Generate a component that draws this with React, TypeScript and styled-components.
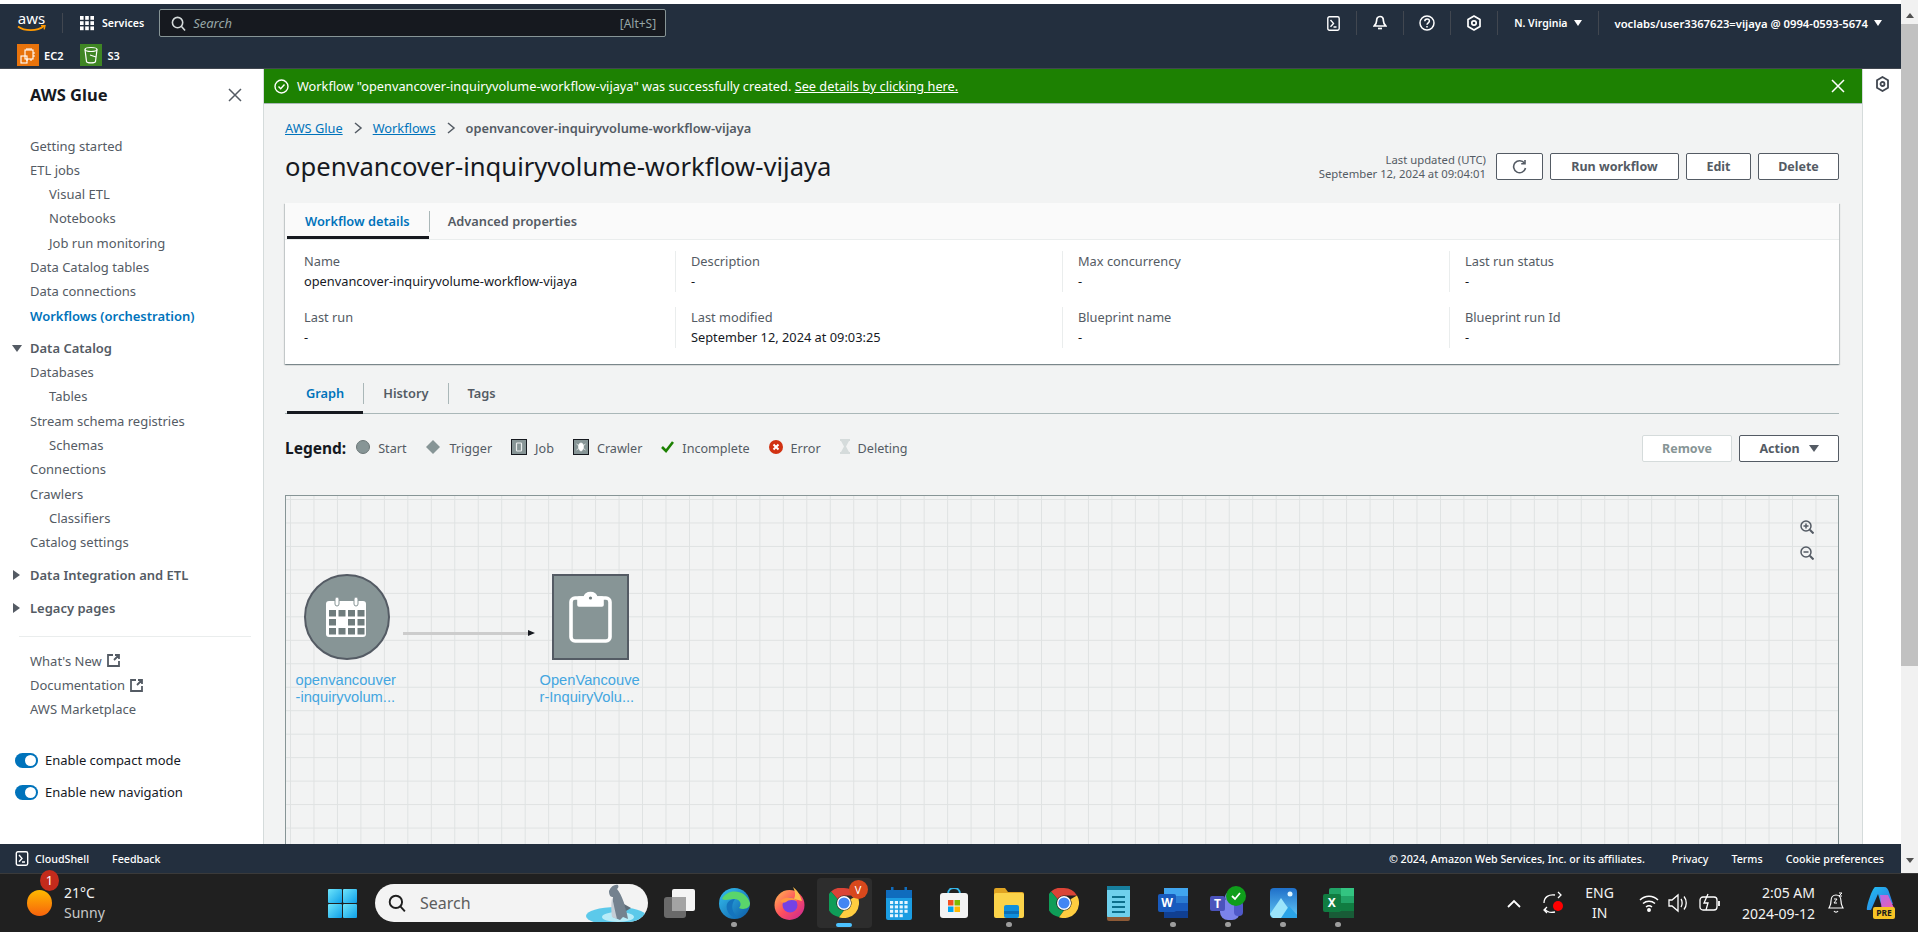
import React from "react";
import styled, { createGlobalStyle } from "styled-components";

const GlobalStyle = createGlobalStyle`
  html, body {
    margin: 0;
    height: 100%;
    overflow: hidden;
    background: #fff;
    font-family: "Noto Sans", "Open Sans", sans-serif;
  }
  * { box-sizing: border-box; }
`;

const Screen = styled.div`
  width: 1918px;
  height: 932px;
  display: flex;
  flex-direction: column;
  overflow: hidden;
`;

const BrowserArea = styled.div`
  height: 873px;
  display: flex;
`;

const Console = styled.div`
  flex: 1;
  min-width: 0;
  display: flex;
  flex-direction: column;
  padding-top: 4px;
`;

const PageScrollbar = styled.div`
  width: 17px;
  background: #f1f1f1;
  display: flex;
  flex-direction: column;
  align-items: center;
  justify-content: space-between;
`;

const ScrollArrow = styled.div<{ $down?: boolean }>`
  width: 100%;
  height: 17px;
  display: flex;
  align-items: center;
  justify-content: center;
  flex-shrink: 0;
  margin-top: ${(p) => (p.$down ? "auto" : "7px")};
  margin-bottom: ${(p) => (p.$down ? "4px" : "0")};

  &::after {
    content: "";
    border-left: 4px solid transparent;
    border-right: 4px solid transparent;
    border-${(p) => (p.$down ? "top" : "bottom")}: 5px solid #505050;
  }
`;

const ScrollThumb = styled.div`
  width: 100%;
  height: 642px;
  background: #c1c1c1;
`;

/* console header */
const Header = styled.header`
  height: 65px;
  background: #232f3e;
  border-bottom: 1px solid #414750;
  color: #fff;
  flex-shrink: 0;
`;

const HeaderTop = styled.div`
  height: 33px;
  padding: 5px 19px 0 17px;
  display: flex;
  align-items: center;
`;

const LogoMark = styled.div`
  width: 29px;
  display: flex;
  flex-direction: column;
  align-items: center;
  line-height: 0;
`;

const LogoWord = styled.span`
  font-size: 15px;
  line-height: 13px;
  font-weight: 400;
  color: #fff;
`;

const LogoDivider = styled.div`
  width: 1px;
  height: 20px;
  background: #414750;
  margin: 0 17px 0 16px;
`;

const ServicesLabel = styled.span`
  font-size: 10.6px;
  font-weight: 600;
  margin-left: 8px;
`;

const SearchBox = styled.div`
  width: 507px;
  height: 28px;
  margin-left: 15px;
  background: #16191f;
  border: 1px solid #879596;
  border-radius: 2px;
  display: flex;
  align-items: center;
  padding: 0 9px 0 11px;
  gap: 7px;
`;

const SearchPlaceholder = styled.span`
  font-size: 13px;
  font-style: italic;
  color: #95a5a6;
  flex: 1;
`;

const SearchHint = styled.span`
  font-size: 12px;
  color: #95a5a6;
`;

const HeaderRight = styled.div`
  margin-left: auto;
  display: flex;
  align-items: center;
  height: 24px;
`;

const HeaderIconSlot = styled.div`
  width: 47px;
  height: 100%;
  display: flex;
  align-items: center;
  justify-content: center;
  border-right: 1px solid #414750;
`;

const HeaderMenu = styled.div<{ $bordered?: boolean }>`
  height: 100%;
  display: flex;
  align-items: center;
  gap: 6px;
  font-size: ${(p) => (p.$bordered ? "10.5px" : "11.25px")};
  font-weight: 600;
  padding-left: 16px;
  padding-right: ${(p) => (p.$bordered ? "16px" : "0")};
  border-right: ${(p) => (p.$bordered ? "1px solid #414750" : "none")};
`;

const Caret = styled.span<{ $dark?: boolean }>`
  border-left: ${(p) => (p.$dark ? 5 : 4)}px solid transparent;
  border-right: ${(p) => (p.$dark ? 5 : 4)}px solid transparent;
  border-top: ${(p) => (p.$dark ? "7px solid #545b64" : "6px solid #fff")};
`;

const Shortcuts = styled.div`
  height: 31px;
  padding: 7px 0 0 17px;
  display: flex;
  align-items: flex-start;
`;

const Shortcut = styled.div`
  display: flex;
  align-items: center;
  gap: 5px;
  font-size: 11px;
  font-weight: 600;
  margin-right: 17px;
`;

const ShortcutTile = styled.div<{ $color: string }>`
  width: 22px;
  height: 22px;
  background: ${(p) => p.$color};
  display: flex;
  align-items: center;
  justify-content: center;
`;

/* body */
const Body = styled.div`
  flex: 1;
  min-height: 0;
  display: flex;
  overflow: hidden;
`;

const Sidebar = styled.aside`
  width: 264px;
  flex-shrink: 0;
  background: #fff;
  border-right: 1px solid #d5dbdb;
  color: #545b64;
`;

const SidebarTitleRow = styled.div`
  height: 64.5px;
  padding: 14px 21px 0 30px;
  display: flex;
  align-items: flex-start;
  justify-content: space-between;
`;

const SidebarTitle = styled.div`
  font-size: 16.5px;
  font-weight: 700;
  line-height: 24px;
  color: #16191f;
`;

const CloseButton = styled.div`
  margin-top: 5px;
  line-height: 0;
`;

const NavList = styled.nav`
  display: flex;
  flex-direction: column;
`;

const NavItem = styled.div<{ $level?: number; $active?: boolean }>`
  height: 24.3px;
  line-height: 24.3px;
  font-size: 13px;
  padding-left: ${(p) => (p.$level === 1 ? 49 : 30)}px;
  font-weight: ${(p) => (p.$active ? 600 : 400)};
  color: ${(p) => (p.$active ? "#0073bb" : "#545b64")};
  display: flex;
  align-items: center;
  gap: 5px;
`;

const NavSection = styled.div<{ $gap?: number }>`
  height: 24.3px;
  margin-top: ${(p) => p.$gap ?? 8.7}px;
  font-size: 13px;
  font-weight: 600;
  color: #545b64;
  display: flex;
  align-items: center;
  padding-left: 12px;
`;

const SectionCaret = styled.span<{ $open?: boolean }>`
  width: 18px;
  display: flex;
  flex-shrink: 0;

  &::before {
    content: "";
    ${(p) =>
      p.$open
        ? `border-left: 5px solid transparent; border-right: 5px solid transparent; border-top: 7px solid #545b64;`
        : `margin-left: 1px; border-top: 5px solid transparent; border-bottom: 5px solid transparent; border-left: 7px solid #545b64;`}
  }
`;

const NavDivider = styled.div`
  height: 1px;
  background: #eaeded;
  margin: 15px 12px 12.3px 19px;
`;

const ToggleRow = styled.div<{ $first?: boolean }>`
  height: 32px;
  margin-top: ${(p) => (p.$first ? "22.5px" : "0")};
  padding-left: 15px;
  display: flex;
  align-items: center;
  gap: 7px;
  font-size: 13px;
  color: #16191f;
`;

const ToggleTrack = styled.span`
  width: 23px;
  height: 15px;
  border-radius: 8px;
  background: #0073bb;
  display: flex;
  align-items: center;
  justify-content: flex-end;
  padding-right: 2px;

  &::after {
    content: "";
    width: 11px;
    height: 11px;
    border-radius: 50%;
    background: #fff;
  }
`;

const Main = styled.main`
  flex: 1;
  min-width: 0;
  background: #f2f3f3;
  display: flex;
  flex-direction: column;
`;

const Banner = styled.div`
  height: 35px;
  background: #1d8102;
  border-bottom: 1px solid #aab7b8;
  color: #fff;
  padding: 0 17px 0 10px;
  display: flex;
  align-items: center;
  gap: 8px;
  font-size: 12.75px;
  font-weight: 400;
  flex-shrink: 0;
`;

const BannerLink = styled.span`
  text-decoration: underline;
`;

const BannerClose = styled.div`
  margin-left: auto;
  line-height: 0;
`;

const Content = styled.div`
  flex: 1;
  min-height: 0;
  padding: 14px 23px 0 21px;
  display: flex;
  flex-direction: column;
`;

const Breadcrumbs = styled.div`
  height: 20px;
  display: flex;
  align-items: center;
  font-size: 12.8px;
  gap: 9px;
`;

const CrumbLink = styled.span`
  color: #0073bb;
  text-decoration: underline;
`;

const CrumbCurrent = styled.span`
  color: #545b64;
  font-weight: 600;
`;

const TitleRow = styled.div`
  height: 35px;
  margin-top: 11px;
  display: flex;
  align-items: center;
`;

const PageTitle = styled.h1`
  margin: 0;
  font-size: 25.6px;
  font-weight: 400;
  color: #16191f;
  flex: 1;
`;

const UpdatedNote = styled.div`
  font-size: 11.3px;
  line-height: 14px;
  text-align: right;
  color: #545b64;
  margin-right: 10px;
`;

const Button = styled.div<{ $width: number; $disabled?: boolean }>`
  width: ${(p) => p.$width}px;
  height: 27px;
  margin-left: ${(p) => (p.$width === 47 ? 0 : 7)}px;
  display: flex;
  align-items: center;
  justify-content: center;
  gap: 9px;
  background: #fff;
  border: 1px solid ${(p) => (p.$disabled ? "#d5dbdb" : "#545b64")};
  border-radius: 2px;
  font-size: 12.5px;
  font-weight: 700;
  color: ${(p) => (p.$disabled ? "#879596" : "#545b64")};
`;

const Card = styled.section`
  margin-top: 19px;
  height: 161px;
  background: #fff;
  box-shadow: 0 1px 1px 0 rgba(0, 28, 36, 0.3), 1px 1px 1px 0 rgba(0, 28, 36, 0.15),
    -1px 1px 1px 0 rgba(0, 28, 36, 0.15);
  flex-shrink: 0;
`;

const CardTabs = styled.div`
  height: 37px;
  background: #fafafa;
  border-bottom: 1px solid #eaeded;
  display: flex;
  align-items: center;
  padding-left: 2px;
`;

const CardTab = styled.div<{ $active?: boolean }>`
  height: 100%;
  padding: 0 19px 0 18px;
  display: flex;
  align-items: center;
  font-size: 12.8px;
  font-weight: 600;
  color: ${(p) => (p.$active ? "#0073bb" : "#545b64")};
  box-shadow: ${(p) => (p.$active ? "inset 0 -3px 0 #16191f" : "none")};
`;

const TabRule = styled.span<{ $lift?: number }>`
  width: 1px;
  height: 21px;
  background: #aab7b8;
  margin-bottom: ${(p) => p.$lift ?? 0}px;
`;

const FieldGrid = styled.div`
  display: grid;
  grid-template-columns: 371px 387px 387px 1fr;
  padding: 11px 0 0 19px;
`;

const FieldColumn = styled.div`
  display: flex;
  flex-direction: column;
  gap: 15px;
`;

const Field = styled.div<{ $first?: boolean }>`
  height: 41px;
  border-left: ${(p) => (p.$first ? "none" : "1px solid #eaeded")};
  padding-left: ${(p) => (p.$first ? "0" : "15px")};
  font-size: 12.8px;
  line-height: 20px;
`;

const FieldLabel = styled.div`
  color: #545b64;
`;

const FieldValue = styled.div`
  color: #16191f;
`;

const GraphTabs = styled.div`
  height: 32px;
  margin-top: 18px;
  border-bottom: 1px solid #aab7b8;
  display: flex;
  align-items: center;
  padding-left: 2px;
  flex-shrink: 0;
`;

const GraphTab = styled.div<{ $active?: boolean }>`
  height: 32px;
  padding: 0 19px 9px 19px;
  display: flex;
  align-items: center;
  font-size: 12.8px;
  font-weight: 600;
  color: ${(p) => (p.$active ? "#0073bb" : "#545b64")};
  box-shadow: ${(p) => (p.$active ? "inset 0 -3px 0 #16191f" : "none")};
`;

const LegendBar = styled.div`
  height: 26px;
  margin-top: 21px;
  display: flex;
  align-items: center;
  flex-shrink: 0;
`;

const LegendTitle = styled.span`
  font-size: 15.5px;
  font-weight: 700;
  color: #16191f;
  margin-right: 10px;
`;

const LegendItems = styled.div`
  display: flex;
  align-items: center;
  gap: 19px;
  flex: 1;
`;

const LegendItem = styled.div`
  display: flex;
  align-items: center;
  gap: 8px;
  font-size: 12.6px;
  color: #545b64;
`;

const LegendGlyph = styled.span`
  line-height: 0;
  margin-bottom: 3px;
`;

const LegendLabel = styled.span`
  margin-top: 1px;
`;

const Graph = styled.div`
  position: relative;
  flex: 1;
  min-height: 0;
  margin-top: 34px;
  border: 1px solid #879596;
  border-bottom: none;
  background-color: #f2f3f3;
  background-image: linear-gradient(#dfe2e2 1px, transparent 1px),
    linear-gradient(90deg, #dfe2e2 1px, transparent 1px);
  background-size: 23.47px 23.47px;
  background-position: 4px 3px;
`;

const ZoomControls = styled.div`
  position: absolute;
  top: 24px;
  right: 24px;
  display: flex;
  flex-direction: column;
  gap: 12px;
  line-height: 0;
`;

const GraphNode = styled.div<{ $x: number; $y: number }>`
  position: absolute;
  left: ${(p) => p.$x}px;
  top: ${(p) => p.$y}px;
  width: 104px;
  display: flex;
  flex-direction: column;
  align-items: center;
`;

const StartShape = styled.div`
  width: 86px;
  height: 86px;
  border-radius: 50%;
  background: #879596;
  border: 2px solid #545b64;
  display: flex;
  align-items: center;
  justify-content: center;
`;

const JobShape = styled.div`
  width: 77px;
  height: 86px;
  background: #879596;
  border: 2px solid #545b64;
  display: flex;
  align-items: center;
  justify-content: center;
`;

const NodeLabel = styled.div`
  margin-top: 12px;
  width: 104px;
  padding-left: 1px;
  font-family: "Liberation Sans", Arial, sans-serif;
  font-size: 14.7px;
  line-height: 17px;
  color: #44a6e0;
  white-space: nowrap;
`;

const Edge = styled.div`
  position: absolute;
  left: 117px;
  top: 136px;
  width: 128px;
  height: 3px;
  background: #ccc;

  &::after {
    content: "";
    position: absolute;
    right: -4px;
    top: -2px;
    border-top: 3.5px solid transparent;
    border-bottom: 3.5px solid transparent;
    border-left: 7px solid #16191f;
  }
`;

const Rail = styled.div`
  width: 39px;
  flex-shrink: 0;
  background: #fff;
  border-left: 1px solid #d5dbdb;
  display: flex;
  justify-content: center;
  padding-top: 7px;
`;

const Footer = styled.footer`
  height: 29px;
  flex-shrink: 0;
  background: #232f3e;
  color: #fff;
  display: flex;
  align-items: center;
  padding: 0 17px 0 15px;
  font-size: 10.7px;
  font-weight: 500;
`;

const FooterLeft = styled.div`
  display: flex;
  align-items: center;
  gap: 6px;
  margin-right: 23px;
`;

const FooterRight = styled.div`
  margin-left: auto;
  display: flex;
  align-items: center;
  gap: 23px;
`;

const Copyright = styled.span`
  margin-right: 4px;
`;

/* windows taskbar */
const Taskbar = styled.div`
  height: 59px;
  flex-shrink: 0;
  background: #202020;
  border-top: 1px solid #3a3a3a;
  color: #fff;
  display: flex;
  align-items: center;
`;

const Weather = styled.div`
  position: relative;
  width: 328px;
  padding-left: 27px;
  display: flex;
  align-items: center;
  gap: 12px;
  flex-shrink: 0;
`;

const WeatherBadge = styled.span`
  position: absolute;
  left: 40px;
  top: -13px;
  width: 19px;
  height: 21px;
  border-radius: 50%;
  background: #c42b1c;
  font-size: 13px;
  line-height: 21px;
  text-align: center;
`;

const WeatherText = styled.div`
  font-size: 14px;
  line-height: 20px;
  color: #f3f3f3;
`;

const WeatherSub = styled.div`
  color: #c9c9c9;
`;

const StartButton = styled.div`
  width: 29px;
  line-height: 0;
  flex-shrink: 0;
`;

const SearchPill = styled.div`
  position: relative;
  width: 273px;
  height: 38px;
  margin-left: 18px;
  border-radius: 19px;
  background: #f3f3f3;
  display: flex;
  align-items: center;
  gap: 14px;
  padding-left: 13px;
  font-size: 16px;
  color: #5d5d5d;
  flex-shrink: 0;
  overflow: hidden;
`;

const PillArt = styled.div`
  position: absolute;
  right: 2px;
  bottom: 0;
  line-height: 0;
`;

const AppRow = styled.div`
  display: flex;
  margin-left: 4px;
  height: 50px;
`;

const AppSlot = styled.div<{ $active?: boolean }>`
  position: relative;
  width: 54.9px;
  height: 50px;
  display: flex;
  align-items: center;
  justify-content: center;
  line-height: 0;
  border-radius: 4px;
  background: ${(p) => (p.$active ? "#2d2d2d" : "transparent")};
`;

const RunningDot = styled.span<{ $active?: boolean }>`
  position: absolute;
  left: 50%;
  bottom: 1px;
  width: ${(p) => (p.$active ? 16 : 6)}px;
  height: ${(p) => (p.$active ? 4 : 5)}px;
  margin-left: ${(p) => (p.$active ? -8 : -3)}px;
  border-radius: 3px;
  background: ${(p) => (p.$active ? "#4cc2ff" : "#9d9d9d")};
`;

const AppBadge = styled.span`
  position: absolute;
  top: 2px;
  right: 4px;
  width: 19px;
  height: 19px;
  border-radius: 50%;
  background: #d8481c;
  font-size: 11px;
  line-height: 19px;
  text-align: center;
`;

const AppLetter = styled.span<{ $x: number; $bg: string; $w: number }>`
  position: absolute;
  left: ${(p) => p.$x}px;
  top: 50%;
  width: ${(p) => p.$w}px;
  height: ${(p) => p.$w}px;
  margin-top: -${(p) => p.$w / 2}px;
  background: ${(p) => p.$bg};
  border-radius: 2px;
  font-size: 12px;
  font-weight: 700;
  line-height: ${(p) => p.$w}px;
  text-align: center;
  color: #fff;
`;

const Tray = styled.div`
  margin-left: auto;
  padding-right: 23px;
  display: flex;
  align-items: center;
`;

const TrayIcon = styled.div<{ $gap?: number }>`
  margin-left: ${(p) => p.$gap ?? 0}px;
  line-height: 0;
`;

const TrayLang = styled.div`
  margin-left: 21px;
  font-size: 14px;
  line-height: 20px;
  text-align: center;
  color: #f3f3f3;
`;

const TrayClock = styled.div`
  margin-left: 21px;
  font-size: 14px;
  line-height: 21px;
  text-align: right;
  color: #f3f3f3;
`;

const CopilotWrap = styled.div`
  position: relative;
  width: 29px;
  height: 34px;
  line-height: 0;
`;

const PreTag = styled.span`
  position: absolute;
  right: 0;
  bottom: 1px;
  width: 22px;
  height: 12px;
  border-radius: 2px;
  background: #f7c325;
  color: #1a1a1a;
  font-size: 8.5px;
  font-weight: 700;
  line-height: 12px;
  text-align: center;
`;

function AwsLogo() {
  return (
    <LogoMark>
      <LogoWord>aws</LogoWord>
      <svg width="29" height="9" viewBox="0 0 29 9" fill="none" stroke="#ff9900">
        <path d="M1 1.500c7 5 19 5 26-.5" strokeWidth="1.800" />
        <path d="M24 .8l4-.4-.8 4" strokeWidth="1.400" />
      </svg>
    </LogoMark>
  );
}

function GridIcon() {
  const cells = [0, 5.2, 10.4];
  return (
    <svg width="14" height="15" viewBox="0 0 14 15" fill="#fff">
      {cells.flatMap((y) => cells.map((x) => <rect key={`${x}-${y}`} x={x} y={y} width="3.6" height="3.8" />))}
    </svg>
  );
}

function Magnifier({ size = 15, color = "#d5dbdb" }: { size?: number; color?: string }) {
  return (
    <svg width={size} height={size} viewBox="0 0 16 16" fill="none" stroke={color} strokeWidth="1.7">
      <circle cx="7" cy="7" r="5.5" />
      <path d="M11 11l4 4.4" />
    </svg>
  );
}

function TerminalIcon({ size = 13, h = 15 }: { size?: number; h?: number }) {
  return (
    <svg width={size} height={h} viewBox="0 0 13 15" fill="none" stroke="#fff" strokeWidth="1.4">
      <rect x="0.8" y="0.8" width="11.4" height="13.4" rx="1.6" />
      <path d="M3.5 4l3 3.4-3 3.4M6.5 11h3" />
    </svg>
  );
}

function BellIcon() {
  return (
    <svg width="14" height="16" viewBox="0 0 14 16" fill="none" stroke="#fff" strokeWidth="1.7">
      <path d="M7 1.500c2.400 0 3.400 2 3.400 4.200 0 2.600 1 3.700 2.400 5.300H1.200c1.400-1.600 2.400-2.700 2.400-5.300C3.600 3.500 4.600 1.500 7 1.500z" />
      <path d="M5 13.500h4" />
    </svg>
  );
}

function HelpIcon() {
  return (
    <svg width="16" height="16" viewBox="0 0 16 16" fill="none" stroke="#fff" strokeWidth="1.5">
      <circle cx="8" cy="8" r="7" />
      <path d="M5.800 6.200c0-3 4.600-3 4.600-.2 0 1.800-2.400 1.800-2.400 3.800" />
      <path d="M8 11v1.400" />
    </svg>
  );
}

function GearIcon() {
  return (
    <svg width="16" height="16" viewBox="0 0 16 16" fill="none" stroke="#fff" strokeWidth="1.7">
      <path d="M8 1l6 3.500v7L8 15l-6-3.500v-7z" strokeLinejoin="round" />
      <circle cx="8" cy="8" r="2.200" />
    </svg>
  );
}

function Ec2Glyph() {
  return (
    <svg width="16" height="18" viewBox="0 0 16 18" fill="none" stroke="#fff" strokeWidth="1.100">
      <rect x="5" y="4" width="8" height="9" />
      <path d="M7 2v2M9 2v2M11 2v2M7 13v2M11 13v2M13 7h2M13 10h2" />
      <rect x="1" y="10" width="6" height="7" />
    </svg>
  );
}

function S3Glyph() {
  return (
    <svg width="16" height="18" viewBox="0 0 16 18" fill="none" stroke="#fff" strokeWidth="1.200">
      <ellipse cx="8" cy="3.500" rx="6" ry="2" />
      <path d="M2 3.500l1.500 12c.4 1.800 8.600 1.800 9 0l1.500-12" />
      <path d="M7 9l6 2" />
    </svg>
  );
}

function CrossIcon({ size, color, weight = 1.5 }: { size: number; color: string; weight?: number }) {
  return (
    <svg width={size} height={size} viewBox="0 0 14 14" stroke={color} strokeWidth={weight} fill="none">
      <path d="M1 1l12 12M13 1L1 13" />
    </svg>
  );
}

function ExternalIcon() {
  return (
    <svg width="13" height="13" viewBox="0 0 13 13" fill="none" stroke="#545b64" strokeWidth="1.800">
      <path d="M6 1H1v11h11V7M7 6l5-5M8 1h4v4" />
    </svg>
  );
}

function CheckCircle() {
  return (
    <svg width="15" height="15" viewBox="0 0 15 15" fill="none" stroke="#fff" strokeWidth="1.400">
      <circle cx="7.500" cy="7.500" r="6.500" />
      <path d="M4.500 7.500l2.200 2.300 3.800-4.300" />
    </svg>
  );
}

function RefreshIcon() {
  return (
    <svg width="15" height="16" viewBox="0 0 15 16" fill="none" stroke="#545b64" strokeWidth="1.600">
      <path d="M12.500 4.200A6 6 0 1 0 13.500 9" />
      <path d="M13 1v3.800H9.200" />
    </svg>
  );
}

function ChevronRight() {
  return (
    <svg width="12" height="12" viewBox="0 0 12 12" fill="none" stroke="#545b64" strokeWidth="1.500">
      <path d="M3 1l6 5-6 5" />
    </svg>
  );
}

function LegendShapeStart() {
  return (
    <svg width="14" height="14" viewBox="0 0 14 14">
      <circle cx="7" cy="7" r="6.500" fill="#879596" stroke="#6b7677" />
    </svg>
  );
}

function LegendShapeTrigger() {
  return (
    <svg width="16" height="16" viewBox="0 0 16 16">
      <path d="M8 1l7 7-7 7-7-7z" fill="#879596" />
    </svg>
  );
}

function LegendShapeJob({ crawler }: { crawler?: boolean }) {
  return (
    <svg width="16" height="16" viewBox="0 0 16 16">
      <rect x="0.500" y="0.500" width="15" height="15" fill="#879596" stroke="#16191f" />
      {crawler ? (
        <path d="M8 4c1.500 0 2.500 1.500 2.500 3.500S9.500 12 8 12 5.500 9.500 5.500 7.500 6.500 4 8 4zM3.500 5l2 1.500M12.500 5l-2 1.500M3.500 11l2-1.500M12.500 11l-2-1.500" fill="#fff" stroke="#fff" strokeWidth="0.700" />
      ) : (
        <rect x="5.500" y="4" width="5" height="8" rx="0.800" fill="none" stroke="#eaeded" strokeWidth="1.200" />
      )}
    </svg>
  );
}

function LegendShapeCheck() {
  return (
    <svg width="13" height="12" viewBox="0 0 13 12" fill="none" stroke="#1d8102" strokeWidth="2.600">
      <path d="M1 6l4 4 7-9" />
    </svg>
  );
}

function LegendShapeError() {
  return (
    <svg width="14" height="14" viewBox="0 0 14 14">
      <circle cx="7" cy="7" r="7" fill="#d13212" />
      <path d="M4.500 4.500l5 5M9.500 4.500l-5 5" stroke="#fff" strokeWidth="2" />
    </svg>
  );
}

function LegendShapeDeleting() {
  return (
    <svg width="10" height="15" viewBox="0 0 10 15" fill="#d5dbdb">
      <path d="M0 0h10v2H9L6 7.500 9 13h1v2H0v-2h1l3-5.500L1 2H0z" />
    </svg>
  );
}

function ZoomIcon({ plus }: { plus?: boolean }) {
  return (
    <svg width="14" height="14" viewBox="0 0 14 14" fill="none" stroke="#545b64" strokeWidth="1.500">
      <circle cx="6" cy="6" r="5" />
      <path d="M9.800 9.800L13.500 13.500" strokeWidth="2" />
      <path d={plus ? "M3.500 6h5M6 3.500v5" : "M3.500 6h5"} />
    </svg>
  );
}

function CalendarGlyph() {
  const xs = [3, 12.5, 22, 31.5];
  const ys = [13, 22, 31];
  return (
    <svg width="41" height="40" viewBox="0 0 41 40">
      <path d="M3 4h34a3 3 0 0 1 3 3v30a3 3 0 0 1-3 3H3a3 3 0 0 1-3-3V7a3 3 0 0 1 3-3z" fill="#fff" />
      <rect x="9" y="0" width="4" height="9" rx="2" fill="#fff" stroke="#879596" />
      <rect x="28" y="0" width="4" height="9" rx="2" fill="#fff" stroke="#879596" />
      {ys.flatMap((y, row) =>
        xs.map((x, col) =>
          row === 1 && col === 1 ? null : <rect key={`${x}-${y}`} x={x} y={y} width="7" height="6.500" fill="#6f7c7d" />,
        ),
      )}
    </svg>
  );
}

function ClipboardGlyph() {
  return (
    <svg width="43" height="52" viewBox="0 0 43 52" fill="none" stroke="#fff" strokeWidth="3.600" strokeLinejoin="round">
      <rect x="2" y="7" width="39" height="43" rx="4" />
      <path d="M10 7h6c0-6 11-6 11 0h6v7H10z" fill="#fff" />
      <circle cx="21.500" cy="7" r="1.600" fill="#6f7c7d" stroke="none" />
    </svg>
  );
}

function RailIcon() {
  return (
    <svg width="13" height="16" viewBox="0 0 13 16" fill="none" stroke="#414750" strokeWidth="1.800">
      <path d="M6.500 1L12 4.200v7.600L6.500 15 1 11.800V4.200z" />
      <circle cx="6.500" cy="8" r="2" />
    </svg>
  );
}

function SunIcon() {
  return (
    <svg width="25" height="26" viewBox="0 0 25 26">
      <defs>
        <linearGradient id="sun" x1="0" y1="0" x2="0" y2="1">
          <stop offset="0" stopColor="#ffb900" />
          <stop offset="1" stopColor="#f7630c" />
        </linearGradient>
      </defs>
      <ellipse cx="12.500" cy="13" rx="12.500" ry="13" fill="url(#sun)" />
    </svg>
  );
}

function WindowsLogo() {
  return (
    <svg width="29" height="29" viewBox="0 0 29 29">
      <defs>
        <linearGradient id="win" x1="0" y1="0" x2="1" y2="1">
          <stop offset="0" stopColor="#6ee5fb" />
          <stop offset="1" stopColor="#0e9fe8" />
        </linearGradient>
      </defs>
      <rect x="0" y="0" width="14" height="14" rx="1" fill="url(#win)" />
      <rect x="15" y="0" width="14" height="14" rx="1" fill="url(#win)" />
      <rect x="0" y="15" width="14" height="14" rx="1" fill="url(#win)" />
      <rect x="15" y="15" width="14" height="14" rx="1" fill="url(#win)" />
    </svg>
  );
}

function DolphinArt() {
  return (
    <svg width="62" height="38" viewBox="0 0 62 38">
      <ellipse cx="32" cy="32" rx="30" ry="9" fill="#5cc9ea" />
      <ellipse cx="34" cy="33" rx="16" ry="5" fill="#b8ecf8" />
      <path d="M25 7c2-5 6-7 9-6 1 2 0 3-1 4 5 6 9 18 11 30l-5-2-3 3-7-3c-1-7-1-14 0-20-2 0-4-1-4-6z" fill="#74828f" />
      <path d="M28 14c-1 6-1 13 0 19l5 2c-2-7-3-15-5-21z" fill="#c5ced6" />
      <path d="M40 20l7 4-5 3z" fill="#5f6d79" />
    </svg>
  );
}

function TaskViewIcon() {
  return (
    <svg width="31" height="29" viewBox="0 0 31 29">
      <rect x="0" y="8" width="22" height="21" rx="3" fill="#6a6a6a" />
      <rect x="8" y="0" width="23" height="22" rx="2" fill="#f4f4f4" />
      <rect x="8" y="8" width="14" height="14" fill="#a3a3a3" />
    </svg>
  );
}

function EdgeIcon() {
  return (
    <svg width="31" height="31" viewBox="0 0 31 31">
      <defs>
        <linearGradient id="edgeA" x1="0" y1="0" x2="1" y2="1">
          <stop offset="0" stopColor="#35c1f1" />
          <stop offset="1" stopColor="#0c59a4" />
        </linearGradient>
      </defs>
      <circle cx="15.500" cy="15.500" r="15.500" fill="url(#edgeA)" />
      <path d="M3 11C8 0 27 1 31 15c0 6-7 7-11 5 3-3 2-9-5-9-5 0-8 2-12 0z" fill="#5ad56b" />
      <path d="M16 11c-6 0-11 5-7 13 2 4 7 6 11 6-7-5-9-12-4-19z" fill="#1474bd" />
    </svg>
  );
}

function FirefoxIcon() {
  return (
    <svg width="31" height="33" viewBox="0 0 31 33">
      <defs>
        <linearGradient id="fox" x1="0" y1="0" x2="1" y2="1">
          <stop offset="0" stopColor="#ffbd4f" />
          <stop offset="0.500" stopColor="#ff4f5e" />
          <stop offset="1" stopColor="#c5249a" />
        </linearGradient>
      </defs>
      <circle cx="15.500" cy="18" r="15" fill="url(#fox)" />
      <path d="M19 0c5 4 7 8 9 14l-8-2c2-4 1-8-1-12z" fill="#ffbd4f" />
      <circle cx="16" cy="18" r="7.500" fill="#7542e5" />
      <path d="M6 14c4-4 13-5 17 0-5-2-9-1-11 1-2 1-4 1-6-1z" fill="#ff9640" />
    </svg>
  );
}

function ChromeIcon({ size = 30 }: { size?: number }) {
  return (
    <svg width={size} height={size} viewBox="0 0 30 30">
      <path d="M15 0a15 15 0 0 1 13 7.500H15A7.500 7.500 0 0 0 8.500 11L2 3.600A15 15 0 0 1 15 0z" fill="#db4437" />
      <path d="M2 3.600L8.500 11a7.500 7.500 0 0 0 6.500 11.500L10 29A15 15 0 0 1 2 3.600z" fill="#0f9d58" />
      <path d="M28 7.500A15 15 0 0 1 10 29.200l5-6.700a7.500 7.500 0 0 0 6.500-11.300z" fill="#ffcd40" />
      <circle cx="15" cy="15" r="7" fill="#fff" />
      <circle cx="15" cy="15" r="5.600" fill="#4285f4" />
    </svg>
  );
}

function CalendarAppIcon() {
  const dots = [0, 1, 2, 3].flatMap((r) => [0, 1, 2, 3].map((c) => ({ r, c })));
  return (
    <svg width="26" height="33" viewBox="0 0 26 33">
      <rect x="0" y="3" width="26" height="30" rx="2" fill="#1b9de2" />
      <rect x="0" y="3" width="26" height="8" fill="#0f6cbd" />
      <rect x="5" y="0" width="2.500" height="6" fill="#0f6cbd" />
      <rect x="18.500" y="0" width="2.500" height="6" fill="#0f6cbd" />
      {dots
        .filter((d) => !(d.r === 3 && d.c === 3))
        .map((d) => (
          <rect key={`${d.r}-${d.c}`} x={4 + d.c * 4.800} y={14 + d.r * 4.400} width="3.200" height="3" fill="#e6f5ff" />
        ))}
    </svg>
  );
}

function StoreIcon() {
  return (
    <svg width="28" height="30" viewBox="0 0 28 30">
      <path d="M8 6c0-8 12-8 12 0" fill="none" stroke="#35b6e8" strokeWidth="2" />
      <rect x="0" y="5" width="28" height="25" rx="3" fill="#f3f3f3" />
      <rect x="8" y="12" width="5.500" height="5.500" fill="#f25022" />
      <rect x="14.500" y="12" width="5.500" height="5.500" fill="#7fba00" />
      <rect x="8" y="18.500" width="5.500" height="5.500" fill="#00a4ef" />
      <rect x="14.500" y="18.500" width="5.500" height="5.500" fill="#ffb900" />
    </svg>
  );
}

function ExplorerIcon() {
  return (
    <svg width="30" height="30" viewBox="0 0 30 30">
      <path d="M0 2a2 2 0 0 1 2-2h9l3 4h14a2 2 0 0 1 2 2v2H0z" fill="#e0a422" />
      <rect x="0" y="5" width="30" height="25" rx="2" fill="#fbd34a" />
      <rect x="10" y="17" width="15" height="13" rx="2" fill="#0f8fdc" />
      <rect x="10" y="23" width="15" height="3" fill="#0b6eb5" />
    </svg>
  );
}

function NotepadIcon() {
  return (
    <svg width="23" height="35" viewBox="0 0 23 35">
      <rect x="0" y="2" width="23" height="33" rx="2" fill="#8d5a36" />
      <rect x="0" y="2" width="23" height="29" rx="1" fill="#6fd0ec" />
      <rect x="0" y="0" width="23" height="4" fill="#177f9e" />
      <path d="M5 11h13M5 16h13M5 21h13M5 26h13" stroke="#0d6f8c" strokeWidth="2" />
    </svg>
  );
}

function WordIcon() {
  return (
    <svg width="30" height="30" viewBox="0 0 30 30">
      <rect x="6" y="0" width="24" height="30" rx="2" fill="#2b7cd3" />
      <rect x="6" y="0" width="24" height="8" fill="#41a5ee" />
      <rect x="6" y="15" width="24" height="8" fill="#185abd" />
      <rect x="6" y="23" width="24" height="7" fill="#103f91" />
    </svg>
  );
}

function TeamsIcon() {
  return (
    <svg width="37" height="34" viewBox="0 0 37 34">
      <circle cx="20" cy="11" r="5" fill="#7b83eb" />
      <rect x="10" y="13" width="20" height="21" rx="8" fill="#7b83eb" />
      <rect x="24" y="15" width="9" height="15" rx="4" fill="#5059c9" />
      <circle cx="26" cy="10" r="10" fill="#0f9d1b" />
      <path d="M22 10l3 3 5-6" fill="none" stroke="#fff" strokeWidth="1.800" />
    </svg>
  );
}

function PhotosIcon() {
  return (
    <svg width="27" height="30" viewBox="0 0 27 30">
      <defs>
        <linearGradient id="photo" x1="0" y1="0" x2="0" y2="1">
          <stop offset="0" stopColor="#1f6fc9" />
          <stop offset="1" stopColor="#62c8f5" />
        </linearGradient>
      </defs>
      <rect x="0" y="0" width="27" height="30" rx="4" fill="url(#photo)" />
      <path d="M0 26l11-16 9 13-5 7H3z" fill="#9ae4fb" />
      <path d="M11 30l8-12 8 9v3z" fill="#2aa4e8" />
      <circle cx="20" cy="6" r="2.500" fill="#dff6ff" />
    </svg>
  );
}

function ExcelIcon() {
  return (
    <svg width="31" height="30" viewBox="0 0 31 30">
      <rect x="6" y="0" width="25" height="30" rx="2" fill="#21a366" />
      <rect x="18" y="0" width="13" height="8" fill="#33c481" />
      <rect x="6" y="8" width="12" height="7" fill="#107c41" />
      <rect x="18" y="15" width="13" height="8" fill="#107c41" />
      <rect x="6" y="23" width="25" height="7" fill="#185c37" />
    </svg>
  );
}

function ChevronUp() {
  return (
    <svg width="14" height="9" viewBox="0 0 14 9" fill="none" stroke="#fff" strokeWidth="1.800">
      <path d="M1 8l6-6 6 6" />
    </svg>
  );
}

function SyncIcon() {
  return (
    <svg width="22" height="26" viewBox="0 0 22 26" fill="none" stroke="#fff" strokeWidth="1.300">
      <path d="M2 13C2 7 7 4 13 5M16 2l3 3-3 3" />
      <path d="M3 19c2 3 6 4 10 3M5 17l-3 3 3 3" />
      <circle cx="16" cy="16" r="5" fill="#f00" stroke="none" />
    </svg>
  );
}

function WifiIcon() {
  return (
    <svg width="20" height="18" viewBox="0 0 20 18" fill="none" stroke="#fff" strokeWidth="1.500">
      <path d="M1 6c5-5 13-5 18 0M4 9.500c3.500-3 8.500-3 12 0M7 13c2-1.600 4-1.600 6 0" />
      <circle cx="10" cy="16" r="1.200" fill="#fff" />
    </svg>
  );
}

function VolumeIcon() {
  return (
    <svg width="21" height="20" viewBox="0 0 21 20" fill="none" stroke="#fff" strokeWidth="1.300">
      <path d="M1 7h3l6-5v16l-6-5H1z" />
      <path d="M13 6c1.500 2 1.500 6 0 8M16 3.500c3 3.500 3 9.500 0 13" />
    </svg>
  );
}

function BatteryIcon() {
  return (
    <svg width="22" height="20" viewBox="0 0 22 20" fill="none" stroke="#fff" strokeWidth="1.300">
      <rect x="1" y="4" width="17" height="13" rx="3" />
      <path d="M20 8v5" strokeWidth="1.800" />
      <path d="M9 1L5 10h4l-2 7" />
    </svg>
  );
}

function SleepBellIcon() {
  return (
    <svg width="16" height="24" viewBox="0 0 16 24" fill="none" stroke="#fff" strokeWidth="1.200">
      <path d="M8 4c3 0 5 2.500 5 6 0 4 1 5 2 7H1c1-2 2-3 2-7 0-3.500 2-6 5-6z" />
      <path d="M6 20c1 1.500 3 1.500 4 0" />
      <path d="M6 8h3l-3 4h3M11 2h3l-3 3h3" strokeWidth="1" />
    </svg>
  );
}

function CopilotIcon() {
  return (
    <CopilotWrap>
      <svg width="29" height="30" viewBox="0 0 29 30">
        <defs>
          <linearGradient id="copA" x1="0" y1="0" x2="1" y2="1">
            <stop offset="0" stopColor="#21c3f2" />
            <stop offset="1" stopColor="#2f6fe0" />
          </linearGradient>
          <linearGradient id="copB" x1="0" y1="0" x2="1" y2="1">
            <stop offset="0" stopColor="#b36be8" />
            <stop offset="1" stopColor="#f45ca8" />
          </linearGradient>
        </defs>
        <path d="M9 1h9c3 0 4 2 5 5l4 12H15L12 8 5 24H1C0 21 6 3 9 1z" fill="url(#copA)" />
        <path d="M14 9h8l6 13c0 3-2 4-4 4h-8z" fill="url(#copB)" />
      </svg>
      <PreTag>PRE</PreTag>
    </CopilotWrap>
  );
}

const FIELD_COLUMNS = [
  [
    { label: "Name", value: "openvancover-inquiryvolume-workflow-vijaya" },
    { label: "Last run", value: "-" },
  ],
  [
    { label: "Description", value: "-" },
    { label: "Last modified", value: "September 12, 2024 at 09:03:25" },
  ],
  [
    { label: "Max concurrency", value: "-" },
    { label: "Blueprint name", value: "-" },
  ],
  [
    { label: "Last run status", value: "-" },
    { label: "Blueprint run Id", value: "-" },
  ],
];

const APPS: { key: string; icon: React.ReactNode; dot?: boolean; active?: boolean; badge?: string; letter?: { text: string; x: number; bg: string; w: number } }[] = [
  { key: "taskview", icon: <TaskViewIcon /> },
  { key: "edge", icon: <EdgeIcon />, dot: true },
  { key: "firefox", icon: <FirefoxIcon /> },
  { key: "chrome", icon: <ChromeIcon />, active: true, badge: "V" },
  { key: "calendar", icon: <CalendarAppIcon /> },
  { key: "store", icon: <StoreIcon /> },
  { key: "explorer", icon: <ExplorerIcon />, dot: true },
  { key: "chrome2", icon: <ChromeIcon /> },
  { key: "notepad", icon: <NotepadIcon /> },
  { key: "word", icon: <WordIcon />, dot: true, letter: { text: "W", x: 12, bg: "#185abd", w: 18 } },
  { key: "teams", icon: <TeamsIcon />, dot: true, letter: { text: "T", x: 9, bg: "#4b53bc", w: 15 } },
  { key: "photos", icon: <PhotosIcon />, dot: true },
  { key: "excel", icon: <ExcelIcon />, dot: true, letter: { text: "X", x: 12, bg: "#107c41", w: 18 } },
];

export default function App() {
  return (
    <Screen>
      <GlobalStyle />
      <BrowserArea>
        <Console>
          <Header>
            <HeaderTop>
              <AwsLogo />
              <LogoDivider />
              <GridIcon />
              <ServicesLabel>Services</ServicesLabel>
              <SearchBox>
                <Magnifier />
                <SearchPlaceholder>Search</SearchPlaceholder>
                <SearchHint>[Alt+S]</SearchHint>
              </SearchBox>
              <HeaderRight>
                <HeaderIconSlot><TerminalIcon /></HeaderIconSlot>
                <HeaderIconSlot><BellIcon /></HeaderIconSlot>
                <HeaderIconSlot><HelpIcon /></HeaderIconSlot>
                <HeaderIconSlot><GearIcon /></HeaderIconSlot>
                <HeaderMenu $bordered>N. Virginia <Caret /></HeaderMenu>
                <HeaderMenu>voclabs/user3367623=vijaya @ 0994-0593-5674 <Caret /></HeaderMenu>
              </HeaderRight>
            </HeaderTop>
            <Shortcuts>
              <Shortcut>
                <ShortcutTile $color="#e8730c"><Ec2Glyph /></ShortcutTile>
                EC2
              </Shortcut>
              <Shortcut>
                <ShortcutTile $color="#3f8624"><S3Glyph /></ShortcutTile>
                S3
              </Shortcut>
            </Shortcuts>
          </Header>

          <Body>
            <Sidebar>
              <SidebarTitleRow>
                <SidebarTitle>AWS Glue</SidebarTitle>
                <CloseButton><CrossIcon size={14} color="#545b64" /></CloseButton>
              </SidebarTitleRow>
              <NavList>
                <NavItem>Getting started</NavItem>
                <NavItem>ETL jobs</NavItem>
                <NavItem $level={1}>Visual ETL</NavItem>
                <NavItem $level={1}>Notebooks</NavItem>
                <NavItem $level={1}>Job run monitoring</NavItem>
                <NavItem>Data Catalog tables</NavItem>
                <NavItem>Data connections</NavItem>
                <NavItem $active>Workflows (orchestration)</NavItem>
                <NavSection $gap={8}><SectionCaret $open />Data Catalog</NavSection>
                <NavItem>Databases</NavItem>
                <NavItem $level={1}>Tables</NavItem>
                <NavItem>Stream schema registries</NavItem>
                <NavItem $level={1}>Schemas</NavItem>
                <NavItem>Connections</NavItem>
                <NavItem>Crawlers</NavItem>
                <NavItem $level={1}>Classifiers</NavItem>
                <NavItem>Catalog settings</NavItem>
                <NavSection><SectionCaret />Data Integration and ETL</NavSection>
                <NavSection><SectionCaret />Legacy pages</NavSection>
                <NavDivider />
                <NavItem>What's New <ExternalIcon /></NavItem>
                <NavItem>Documentation <ExternalIcon /></NavItem>
                <NavItem>AWS Marketplace</NavItem>
              </NavList>
              <ToggleRow $first><ToggleTrack />Enable compact mode</ToggleRow>
              <ToggleRow><ToggleTrack />Enable new navigation</ToggleRow>
            </Sidebar>

            <Main>
              <Banner>
                <CheckCircle />
                <span>
                  Workflow "openvancover-inquiryvolume-workflow-vijaya" was successfully created.{" "}
                  <BannerLink>See details by clicking here.</BannerLink>
                </span>
                <BannerClose><CrossIcon size={14} color="#fff" /></BannerClose>
              </Banner>
              <Content>
                <Breadcrumbs>
                  <CrumbLink>AWS Glue</CrumbLink>
                  <ChevronRight />
                  <CrumbLink>Workflows</CrumbLink>
                  <ChevronRight />
                  <CrumbCurrent>openvancover-inquiryvolume-workflow-vijaya</CrumbCurrent>
                </Breadcrumbs>
                <TitleRow>
                  <PageTitle>openvancover-inquiryvolume-workflow-vijaya</PageTitle>
                  <UpdatedNote>
                    Last updated (UTC)
                    <br />
                    September 12, 2024 at 09:04:01
                  </UpdatedNote>
                  <Button $width={47}><RefreshIcon /></Button>
                  <Button $width={129}>Run workflow</Button>
                  <Button $width={65}>Edit</Button>
                  <Button $width={81}>Delete</Button>
                </TitleRow>

                <Card>
                  <CardTabs>
                    <CardTab $active>Workflow details</CardTab>
                    <TabRule />
                    <CardTab>Advanced properties</CardTab>
                  </CardTabs>
                  <FieldGrid>
                    {FIELD_COLUMNS.map((column, i) => (
                      <FieldColumn key={column[0].label}>
                        {column.map((f) => (
                          <Field key={f.label} $first={i === 0}>
                            <FieldLabel>{f.label}</FieldLabel>
                            <FieldValue>{f.value}</FieldValue>
                          </Field>
                        ))}
                      </FieldColumn>
                    ))}
                  </FieldGrid>
                </Card>

                <GraphTabs>
                  <GraphTab $active>Graph</GraphTab>
                  <TabRule $lift={9} />
                  <GraphTab>History</GraphTab>
                  <TabRule $lift={9} />
                  <GraphTab>Tags</GraphTab>
                </GraphTabs>

                <LegendBar>
                  <LegendTitle>Legend:</LegendTitle>
                  <LegendItems>
                    <LegendItem><LegendGlyph><LegendShapeStart /></LegendGlyph><LegendLabel>Start</LegendLabel></LegendItem>
                    <LegendItem><LegendGlyph><LegendShapeTrigger /></LegendGlyph><LegendLabel>Trigger</LegendLabel></LegendItem>
                    <LegendItem><LegendGlyph><LegendShapeJob /></LegendGlyph><LegendLabel>Job</LegendLabel></LegendItem>
                    <LegendItem><LegendGlyph><LegendShapeJob crawler /></LegendGlyph><LegendLabel>Crawler</LegendLabel></LegendItem>
                    <LegendItem><LegendGlyph><LegendShapeCheck /></LegendGlyph><LegendLabel>Incomplete</LegendLabel></LegendItem>
                    <LegendItem><LegendGlyph><LegendShapeError /></LegendGlyph><LegendLabel>Error</LegendLabel></LegendItem>
                    <LegendItem><LegendGlyph><LegendShapeDeleting /></LegendGlyph><LegendLabel>Deleting</LegendLabel></LegendItem>
                  </LegendItems>
                  <Button $width={90} $disabled>Remove</Button>
                  <Button $width={100}>Action <Caret $dark /></Button>
                </LegendBar>

                <Graph>
                  <ZoomControls>
                    <ZoomIcon plus />
                    <ZoomIcon />
                  </ZoomControls>
                  <GraphNode $x={8.5} $y={78}>
                    <StartShape><CalendarGlyph /></StartShape>
                    <NodeLabel>openvancouver<br />-inquiryvolum...</NodeLabel>
                  </GraphNode>
                  <Edge />
                  <GraphNode $x={252.5} $y={78}>
                    <JobShape><ClipboardGlyph /></JobShape>
                    <NodeLabel>OpenVancouve<br />r-InquiryVolu...</NodeLabel>
                  </GraphNode>
                </Graph>
              </Content>
            </Main>
            <Rail><RailIcon /></Rail>
          </Body>

          <Footer>
            <FooterLeft><TerminalIcon size={14} h={15} />CloudShell</FooterLeft>
            <span>Feedback</span>
            <FooterRight>
              <Copyright>© 2024, Amazon Web Services, Inc. or its affiliates.</Copyright>
              <span>Privacy</span>
              <span>Terms</span>
              <span>Cookie preferences</span>
            </FooterRight>
          </Footer>
        </Console>
        <PageScrollbar>
          <ScrollArrow />
          <ScrollThumb />
          <ScrollArrow $down />
        </PageScrollbar>
      </BrowserArea>

      <Taskbar>
        <Weather>
          <SunIcon />
          <WeatherBadge>1</WeatherBadge>
          <WeatherText>
            21°C
            <WeatherSub>Sunny</WeatherSub>
          </WeatherText>
        </Weather>
        <StartButton><WindowsLogo /></StartButton>
        <SearchPill>
          <Magnifier size={18} color="#1f1f1f" />
          Search
          <PillArt><DolphinArt /></PillArt>
        </SearchPill>
        <AppRow>
          {APPS.map((app) => (
            <AppSlot key={app.key} $active={app.active}>
              {app.icon}
              {app.letter && (
                <AppLetter $x={app.letter.x} $bg={app.letter.bg} $w={app.letter.w}>
                  {app.letter.text}
                </AppLetter>
              )}
              {app.badge && <AppBadge>{app.badge}</AppBadge>}
              {(app.dot || app.active) && <RunningDot $active={app.active} />}
            </AppSlot>
          ))}
        </AppRow>
        <Tray>
          <TrayIcon><ChevronUp /></TrayIcon>
          <TrayIcon $gap={21.5}><SyncIcon /></TrayIcon>
          <TrayLang>ENG<br />IN</TrayLang>
          <TrayIcon $gap={25}><WifiIcon /></TrayIcon>
          <TrayIcon $gap={9}><VolumeIcon /></TrayIcon>
          <TrayIcon $gap={10}><BatteryIcon /></TrayIcon>
          <TrayClock>2:05 AM<br />2024-09-12</TrayClock>
          <TrayIcon $gap={13}><SleepBellIcon /></TrayIcon>
          <TrayIcon $gap={22}><CopilotIcon /></TrayIcon>
        </Tray>
      </Taskbar>
    </Screen>
  );
}
